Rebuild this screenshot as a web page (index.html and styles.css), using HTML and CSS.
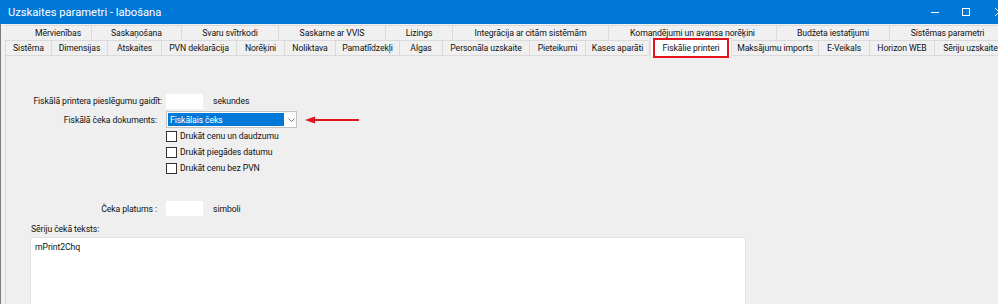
FILE: index.html
```html
<!DOCTYPE html>
<html>
<head>
<title>Uzskaites parametri - labošana</title>
<meta charset="utf-8"/>
<link rel="stylesheet" href="styles.css">
</head>
<body>

<div class="titlebar">
  <span class="title">Uzskaites parametri - labošana</span>
  <div class="controls">
    <span class="ctl"><svg width="10" height="10"><path d="M1 5.5h8" stroke="#fff" stroke-width="1"/></svg></span>
    <span class="ctl"><svg width="10" height="10"><rect x="1.5" y="1.5" width="7" height="7" fill="none" stroke="#fff" stroke-width="1"/></svg></span>
    <span class="ctl"><svg width="10" height="10"><path d="M1 1l8 8M9 1l-8 8" stroke="#fff" stroke-width="1"/></svg></span>
  </div>
</div>

<div class="frame">
  <div class="tabrow row-top">
    <div class="tab first">Mērvienības</div>
    <div class="tab">Saskaņošana</div>
    <div class="tab">Svaru svītrkodi</div>
    <div class="tab">Saskarne ar VVIS</div>
    <div class="tab">Lizings</div>
    <div class="tab">Integrācija ar citām sistēmām</div>
    <div class="tab">Komandējumi un avansa norēķini</div>
    <div class="tab">Budžeta iestatījumi</div>
    <div class="tab">Sistēmas parametri</div>
  </div>
  <div class="tabrow row-bottom">
    <div class="tab">Sistēma</div>
    <div class="tab">Dimensijas</div>
    <div class="tab">Atskaites</div>
    <div class="tab">PVN deklarācija</div>
    <div class="tab">Norēķini</div>
    <div class="tab">Noliktava</div>
    <div class="tab">Pamatlīdzekļi</div>
    <div class="tab">Algas</div>
    <div class="tab">Personāla uzskaite</div>
    <div class="tab">Pieteikumi</div>
    <div class="tab">Kases aparāti</div>
    <div class="tab active">Fiskālie printeri</div>
    <div class="tab">Maksājumu imports</div>
    <div class="tab">E-Veikals</div>
    <div class="tab">Horizon WEB</div>
    <div class="tab">Sēriju uzskaite</div>
  </div>

  <div class="panel">
    <div class="row">
      <span class="lbl">Fiskālā printera pieslēgumu gaidīt:</span>
      <span class="field"></span>
      <span class="unit">sekundes</span>
    </div>
    <div class="row row-select">
      <span class="lbl pad">Fiskālā čeka dokuments:</span>
      <div class="select">
        <span class="value">Fiskālais čeks</span>
        <svg class="chev" width="7" height="4"><path d="M0.5 0.5l3 3 3-3" fill="none" stroke="#777" stroke-width="1"/></svg>
      </div>
      <svg class="arrow" width="54" height="8"><path d="M8 4h46" stroke="#e3141c" stroke-width="2"/><path d="M0 4l10-3.5v7z" fill="#e3141c"/></svg>
    </div>
    <div class="check"><span class="box"></span>Drukāt cenu un daudzumu</div>
    <div class="check"><span class="box"></span>Drukāt piegādes datumu</div>
    <div class="check"><span class="box"></span>Drukāt cenu bez PVN</div>
    <div class="row row-width">
      <span class="lbl pad">Čeka platums :</span>
      <span class="field"></span>
      <span class="unit">simboli</span>
    </div>
    <div class="memo-lbl">Sēriju čekā teksts:</div>
    <div class="memo">mPrint2Chq</div>
  </div>
</div>

</body>
</html>
```

FILE: styles.css
```css
* { box-sizing:border-box; }
html, body { margin:0; padding:0; }
body {
  width:998px;
  height:304px;
  overflow:hidden;
  background:#f0f0f0;
  font-family:Roboto, "Liberation Sans", sans-serif;
  font-size:8.7px;
  letter-spacing:-0.1px;
  color:#111;
  display:flex;
  flex-direction:column;
}

.titlebar {
  height:24px;
  background:#0078d7;
  color:#fff;
  display:flex;
  align-items:center;
  padding-left:8px;
  font-size:11.2px;
  letter-spacing:0;
  flex:none;
}
.title { flex:1; }
.controls { display:flex; height:24px; margin-right:-17px; }
.ctl { width:33px; display:flex; align-items:center; justify-content:center; }
.ctl:first-child { margin-right:-2px; }

.frame {
  flex:1;
  display:flex;
  flex-direction:column;
  border-left:1px solid #7a7a7a;
  padding-left:4px;
  min-height:0;
}

.tabrow { display:grid; height:15px; flex:none; }
.row-top {
  margin-top:1px;
  grid-template-columns:87px 90px 97px 107px 67px 156px 168px 113px 116px;
}
.row-bottom {
  grid-template-columns:47px 56px 54px 75px 48px 51px 64px 43px 87px 56px 64px 82px 87px 51px 65px 72px;
}
.tab {
  display:flex;
  align-items:center;
  justify-content:center;
  white-space:nowrap;
  background:#f0f0f0;
  border-top:1px solid #dadada;
  border-right:1px solid #dadada;
}
.row-top .first { padding-left:20px; }
.row-bottom .tab:first-child { border-left:1px solid #dadada; }
.tab.active {
  position:relative;
  z-index:1;
  background:#fff;
  margin:-2px 0 -1px;
  border-left:1px solid #dadada;
}
.tab.active::after {
  content:"";
  position:absolute;
  left:2px;
  top:-1px;
  bottom:-2px;
  width:72px;
  border:2px solid #e3141c;
}

.panel {
  flex:1;
  background:#efefef;
  border-top:1px solid #dadada;
  border-left:1px solid #dadada;
  padding-top:37px;
}
.row { display:flex; align-items:center; height:16px; }
.lbl { width:156px; text-align:right; margin-right:4px; white-space:nowrap; }
.lbl.pad { padding-right:5px; }
.field { width:37px; height:15px; background:#fff; }
.unit { margin-left:10px; }

.row-select { margin-top:2px; height:17px; }
.select {
  width:131px;
  height:17px;
  background:#fff;
  border:1px solid #c4c4c4;
  padding:1px;
  display:flex;
  align-items:center;
}
.select .value {
  width:118px;
  height:100%;
  background:#0078d7;
  color:#fff;
  padding-left:2px;
  display:flex;
  align-items:center;
}
.chev { margin-left:4px; }
.arrow { margin-left:8px; }

.check { display:flex; align-items:center; height:16px; padding-left:160px; }
.box {
  width:11px;
  height:11px;
  border:1px solid #333;
  background:#fff;
  margin-right:3px;
}

.row-width { margin-top:25px; height:15px; }

.memo-lbl { margin-top:8px; height:11px; line-height:11px; padding-left:25px; }
.memo {
  margin:2px 0 0 24px;
  width:716px;
  height:80px;
  background:#fff;
  border:1px solid #e4e4e4;
  padding:4px 4px;
}
```
